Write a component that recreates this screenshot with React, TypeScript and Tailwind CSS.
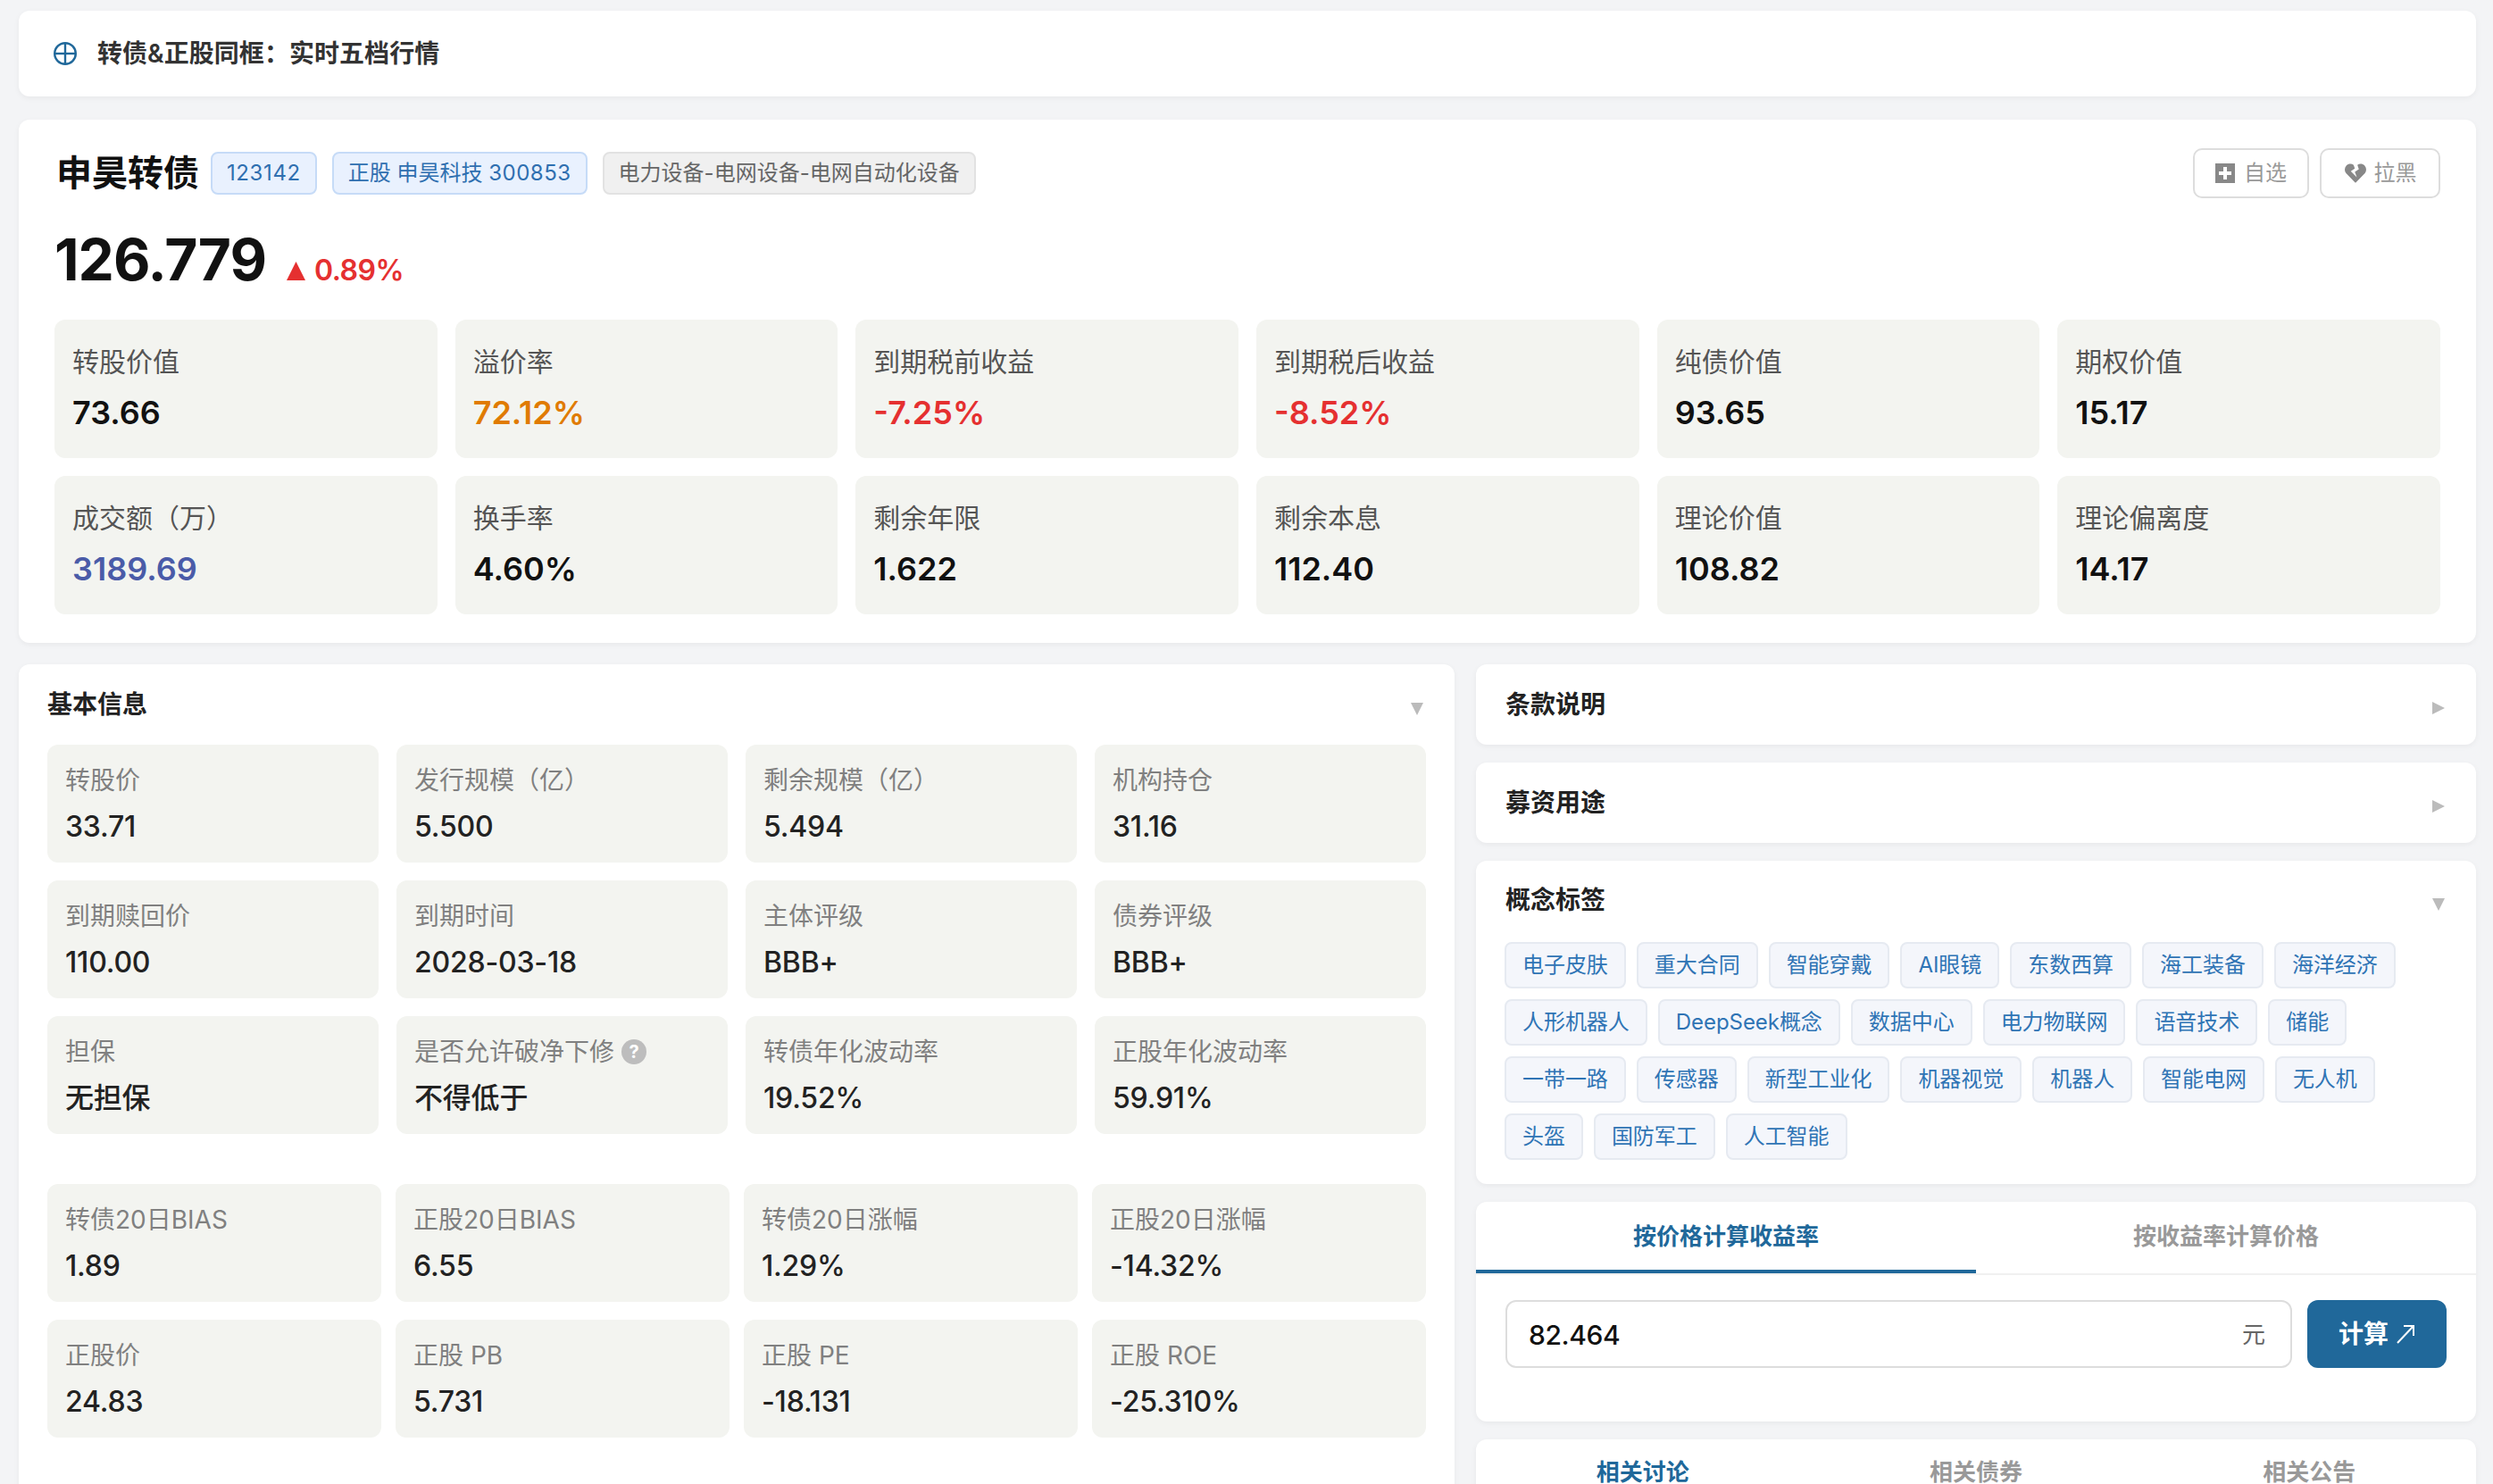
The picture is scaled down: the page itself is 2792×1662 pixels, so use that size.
import React from "react";
import { FaHeartBroken } from "react-icons/fa";

const FONT = "font-['Inter','Noto_Sans_CJK_SC',sans-serif]";

type Stat = { label: string; value: string; color?: string };

const topStats: Stat[] = [
  { label: "转股价值", value: "73.66", color: "text-[#111111]" },
  { label: "溢价率", value: "72.12%", color: "text-[#e07b00]" },
  { label: "到期税前收益", value: "-7.25%", color: "text-[#e53030]" },
  { label: "到期税后收益", value: "-8.52%", color: "text-[#e53030]" },
  { label: "纯债价值", value: "93.65", color: "text-[#111111]" },
  { label: "期权价值", value: "15.17", color: "text-[#111111]" },
  { label: "成交额（万）", value: "3189.69", color: "text-[#4a5ba8]" },
  { label: "换手率", value: "4.60%", color: "text-[#111111]" },
  { label: "剩余年限", value: "1.622", color: "text-[#111111]" },
  { label: "剩余本息", value: "112.40", color: "text-[#111111]" },
  { label: "理论价值", value: "108.82", color: "text-[#111111]" },
  { label: "理论偏离度", value: "14.17", color: "text-[#111111]" },
];

const basicA: Stat[] = [
  { label: "转股价", value: "33.71" },
  { label: "发行规模（亿）", value: "5.500" },
  { label: "剩余规模（亿）", value: "5.494" },
  { label: "机构持仓", value: "31.16" },
  { label: "到期赎回价", value: "110.00" },
  { label: "到期时间", value: "2028-03-18" },
  { label: "主体评级", value: "BBB+" },
  { label: "债券评级", value: "BBB+" },
  { label: "担保", value: "无担保" },
  { label: "是否允许破净下修", value: "不得低于" },
  { label: "转债年化波动率", value: "19.52%" },
  { label: "正股年化波动率", value: "59.91%" },
];

const basicB: Stat[] = [
  { label: "转债20日BIAS", value: "1.89" },
  { label: "正股20日BIAS", value: "6.55" },
  { label: "转债20日涨幅", value: "1.29%" },
  { label: "正股20日涨幅", value: "-14.32%" },
  { label: "正股价", value: "24.83" },
  { label: "正股 PB", value: "5.731" },
  { label: "正股 PE", value: "-18.131" },
  { label: "正股 ROE", value: "-25.310%" },
];

const tags = [
  "电子皮肤", "重大合同", "智能穿戴", "AI眼镜", "东数西算", "海工装备", "海洋经济",
  "人形机器人", "DeepSeek概念", "数据中心", "电力物联网", "语音技术", "储能",
  "一带一路", "传感器", "新型工业化", "机器视觉", "机器人", "智能电网", "无人机",
  "头盔", "国防军工", "人工智能",
];

const CARD = "bg-white rounded-[12px] shadow-[0_2px_6px_rgba(0,0,0,0.05)]";

function TriRight() {
  return (
    <svg width="14" height="14" viewBox="0 0 14 14" className="shrink-0">
      <polygon points="0,0 14,7 0,14" fill="#bbbbbb" />
    </svg>
  );
}
function TriDown() {
  return (
    <svg width="14" height="14" viewBox="0 0 14 14" className="shrink-0">
      <polygon points="0,0 14,0 7,14" fill="#bbbbbb" />
    </svg>
  );
}

function BasicCell({ s }: { s: Stat }) {
  return (
    <div className="h-[132px] rounded-[12px] bg-[#f3f4f0] px-[20px] pt-[20px]">
      <div className="flex h-[40px] items-center gap-[8px] text-[28px] leading-[40px] text-[#808080]">
        {s.label}
        {s.label === "是否允许破净下修" && (
          <span className="flex h-[28px] w-[28px] items-center justify-center rounded-full bg-[#bdbdbd] text-[20px] font-bold leading-none text-white">?</span>
        )}
      </div>
      <div className="mt-[10px] text-[32px] font-medium leading-[44px] tracking-[-0.2px] text-[#222222]">{s.value}</div>
    </div>
  );
}

export default function App() {
  return (
    <div className={`${FONT} h-screen overflow-hidden bg-[#f3f4f6] pl-[21px] pr-[19px] pt-[12px] text-[#222222]`}>
      <div className={`${CARD} mb-[26px] flex h-[96px] items-center gap-[23px] pl-[39px]`}>
        <svg width="26" height="26" viewBox="0 0 26 26" fill="none" stroke="#20689a" strokeWidth="2.4" className="shrink-0">
          <circle cx="13" cy="13" r="11.8" />
          <line x1="1" y1="13" x2="25" y2="13" />
          <line x1="13" y1="1" x2="13" y2="25" />
        </svg>
        <div className="text-[28px] font-semibold tracking-[0.05px] text-[#333333]">转债&amp;正股同框：实时五档行情</div>
      </div>

      <div className={`${CARD} mb-[24px] h-[586px] px-[40px] pt-[32px]`}>
        <div className="flex h-[56px] items-center justify-between">
          <div className="flex items-center">
            <h1 className="ml-[2px] mr-[13px] text-[40px] font-bold leading-none text-[#111111]">申昊转债</h1>
            <span className="mr-[17px] flex h-[48px] items-center rounded-[8px] border-2 border-[#c6dbf7] bg-[#e9f1fe] px-[16px] text-[24px] tracking-[0.6px] text-[#2f6fb0]">123142</span>
            <span className="mr-[17px] flex h-[48px] items-center whitespace-pre rounded-[8px] border-2 border-[#c6dbf7] bg-[#e9f1fe] px-[16px] text-[24px] text-[#2f6fb0]">正股 申昊科技 <span className="tracking-[0.5px]">300853</span></span>
            <span className="flex h-[48px] items-center rounded-[8px] border-2 border-[#e2e2e2] bg-[#f0f0f0] px-[16px] text-[24px] text-[#666666]">电力设备-电网设备-电网自动化设备</span>
          </div>
          <div className="flex gap-[12px] text-[24px] text-[#999999]">
            <button className="flex h-[56px] w-[130px] items-center justify-center gap-[10px] rounded-[10px] border-2 border-[#dddddd] bg-white">
              <svg width="22" height="22" viewBox="0 0 22 22" className="shrink-0">
                <rect width="22" height="22" fill="#888888" />
                <rect x="9" y="4" width="4" height="14" fill="#ffffff" />
                <rect x="4" y="9" width="14" height="4" fill="#ffffff" />
              </svg>
              自选
            </button>
            <button className="flex h-[56px] w-[135px] items-center justify-center gap-[8px] rounded-[10px] border-2 border-[#dddddd] bg-white">
              <FaHeartBroken className="h-[24px] w-[26px] shrink-0 text-[#888888]" />
              拉黑
            </button>
          </div>
        </div>

        <div className="flex h-[136px] items-baseline pt-[31px]">
          <span className="text-[64px] font-bold leading-[76px] tracking-[-1px] text-[#111111]">126.779</span>
          <svg width="21" height="21" viewBox="0 0 21 21" className="ml-[23px] mr-[10px] shrink-0">
            <polygon points="10.5,0 21,21 0,21" fill="#e53030" />
          </svg>
          <span className="text-[32px] font-semibold tracking-[-0.5px] text-[#e53030]">0.89%</span>
        </div>

        <div className="grid grid-cols-6 gap-x-[20px] gap-y-[20px]">
          {topStats.map((s) => (
            <div key={s.label} className="h-[155px] rounded-[12px] bg-[#f3f4f0] px-[20px] pt-[26px]">
              <div className="text-[30px] leading-[42px] text-[#555555]">{s.label}</div>
              <div className={`mt-[14px] text-[36px] font-semibold leading-[44px] ${s.color}`}>{s.value}</div>
            </div>
          ))}
        </div>
      </div>

      <div className="grid grid-cols-[1608px_1120px] gap-x-[24px]">
        <div className={`${CARD} h-[1200px] pl-[32px] pr-[32px] pt-[25px]`}>
          <div className="mb-[25px] flex h-[40px] items-center justify-between pr-[3px]">
            <div className="text-[28px] font-semibold leading-[40px]">基本信息</div>
            <div className="pt-[10px]"><TriDown /></div>
          </div>
          <div className="grid grid-cols-4 gap-[20px]">
            {basicA.map((s) => <BasicCell key={s.label} s={s} />)}
          </div>
          <div className="mt-[56px] grid grid-cols-4 gap-x-[16px] gap-y-[20px]">
            {basicB.map((s) => <BasicCell key={s.label} s={s} />)}
          </div>
        </div>

        <div className="flex flex-col gap-[20px]">
          {["条款说明", "募资用途"].map((t) => (
            <div key={t} className={`${CARD} flex h-[90px] items-center justify-between pl-[33px] pr-[35px]`}>
              <div className="text-[28px] font-semibold leading-[40px]">{t}</div>
              <div className="pt-[8px]"><TriRight /></div>
            </div>
          ))}

          <div className={`${CARD} h-[362px] pl-[32px] pr-[33px] pt-[24px]`}>
            <div className="mb-[27px] flex h-[40px] items-center justify-between pl-[1px] pr-[2px]">
              <div className="text-[28px] font-semibold leading-[40px]">概念标签</div>
              <div className="pt-[10px]"><TriDown /></div>
            </div>
            <div className="flex flex-wrap gap-[12px]">
              {tags.map((t) => (
                <span key={t} className="flex h-[52px] items-center rounded-[8px] border-2 border-[#e6eaf1] bg-[#f4f6fb] px-[18px] text-[24px] tracking-[-0.05px] text-[#2f74b5]">{t}</span>
              ))}
            </div>
          </div>

          <div className={`${CARD} h-[246px]`}>
            <div className="flex h-[82px] border-b-2 border-[#f0f0f0] text-[26px] font-semibold">
              <div className="flex flex-1 items-center justify-center border-b-[4px] border-[#20689a] text-[#20689a]">按价格计算收益率</div>
              <div className="flex flex-1 items-center justify-center pb-[4px] text-[#999999]">按收益率计算价格</div>
            </div>
            <div className="flex gap-[17px] px-[33px] pt-[28px]">
              <div className="flex h-[76px] flex-1 items-center justify-between rounded-[12px] border-2 border-[#dddddd] pl-[24px] pr-[28px]">
                <span className="pt-[2px] text-[30px] font-medium tracking-[-0.4px] text-[#111111]">82.464</span>
                <span className="text-[26px] text-[#666666]">元</span>
              </div>
              <button className="flex h-[76px] w-[156px] items-center justify-center gap-[8px] rounded-[12px] bg-[#20689a] text-[28px] font-semibold text-white">
                计算
                <svg width="22" height="22" viewBox="0 0 22 22" fill="none" stroke="#ffffff" strokeWidth="2" className="shrink-0">
                  <line x1="2" y1="21" x2="20" y2="2" />
                  <polyline points="9,2 20,2 20,13" />
                </svg>
              </button>
            </div>
          </div>

          <div className={`${CARD} h-[400px]`}>
            <div className="flex h-[72px] text-[26px] font-semibold">
              <div className="flex flex-1 items-center justify-center text-[#20689a]">相关讨论</div>
              <div className="flex flex-1 items-center justify-center text-[#999999]">相关债券</div>
              <div className="flex flex-1 items-center justify-center text-[#999999]">相关公告</div>
            </div>
          </div>
        </div>
      </div>
    </div>
  );
}
